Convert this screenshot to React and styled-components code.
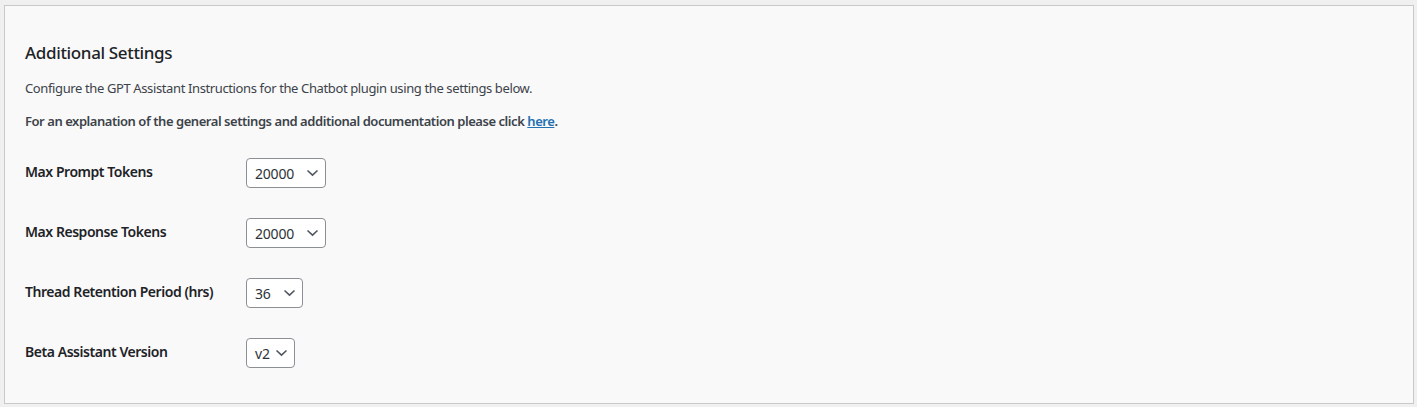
import React from "react";
import styled, { createGlobalStyle } from "styled-components";

const GlobalStyle = createGlobalStyle`
  html, body {
    margin: 0;
    padding: 0;
    background: #f0f0f1;
  }
  body {
    font-family: "Noto Sans", "Open Sans", sans-serif;
    color: #1d2327;
  }
`;

const rows = [
  { label: "Max Prompt Tokens", value: "20000", width: 80 },
  { label: "Max Response Tokens", value: "20000", width: 80 },
  { label: "Thread Retention Period (hrs)", value: "36", width: 57 },
  { label: "Beta Assistant Version", value: "v2", width: 49 },
];

const Chevron = () => (
  <svg width="13" height="8" viewBox="0 0 13 8" aria-hidden="true">
    <path d="M1.5 1.5 L6.5 6.2 L11.5 1.5" fill="none" stroke="#50575e" strokeWidth="1.6" />
  </svg>
);

const Select = ({ value, width }) => (
  <SelectBox style={{ width }}>
    <SelectValue>{value}</SelectValue>
    <Chevron />
  </SelectBox>
);

export default function App() {
  return (
    <>
      <GlobalStyle />
      <Page>
        <Card>
          <Heading>Additional Settings</Heading>
          <Para>Configure the GPT Assistant Instructions for the Chatbot plugin using the settings below.</Para>
          <Para $bold>
            For an explanation of the general settings and additional documentation please click{" "}
            <Link href="#">here</Link>.
          </Para>
          <Table>
            {rows.map((row) => (
              <Row key={row.label}>
                <Label>{row.label}</Label>
                <Select value={row.value} width={row.width} />
              </Row>
            ))}
          </Table>
        </Card>
      </Page>
    </>
  );
}

const Page = styled.div`
  padding: 5px 3px 3px 4px;
`;

const Card = styled.section`
  background: #f9f9f9;
  border: 1px solid #c9c9c9;
  box-sizing: border-box;
  height: 399px;
  padding: 35px 20px 20px 20px;
`;

const Heading = styled.h2`
  font-size: 17px;
  font-weight: 500;
  line-height: 24px;
  letter-spacing: -0.35px;
  margin: 0 0 13px;
  color: #1d2327;
`;

const Para = styled.p`
  font-size: 13px;
  line-height: 20px;
  letter-spacing: ${({ $bold }) => ($bold ? "-0.45px" : "-0.38px")};
  margin: 0 0 13px;
  color: #3c434a;
  font-weight: ${({ $bold }) => ($bold ? 600 : 400)};
`;

const Link = styled.a`
  color: #2271b1;
  text-decoration: underline;
`;

const Table = styled.div`
  display: flex;
  flex-direction: column;
  margin-top: -1px;
`;

const Row = styled.div`
  display: grid;
  grid-template-columns: 221px auto;
  align-items: center;
  height: 60px;
`;

const Label = styled.div`
  font-size: 14px;
  font-weight: 600;
  letter-spacing: -0.45px;
  line-height: 20px;
  padding-bottom: 3px;
  color: #1d2327;
`;

const SelectBox = styled.div`
  box-sizing: border-box;
  height: 30px;
  border: 1px solid #8c8f94;
  border-radius: 4px;
  background: #fff;
  display: flex;
  align-items: center;
  justify-content: space-between;
  padding: 0 6px 0 8px;
`;

const SelectValue = styled.span`
  font-size: 14px;
  letter-spacing: -0.2px;
  color: #2c3338;
`;
